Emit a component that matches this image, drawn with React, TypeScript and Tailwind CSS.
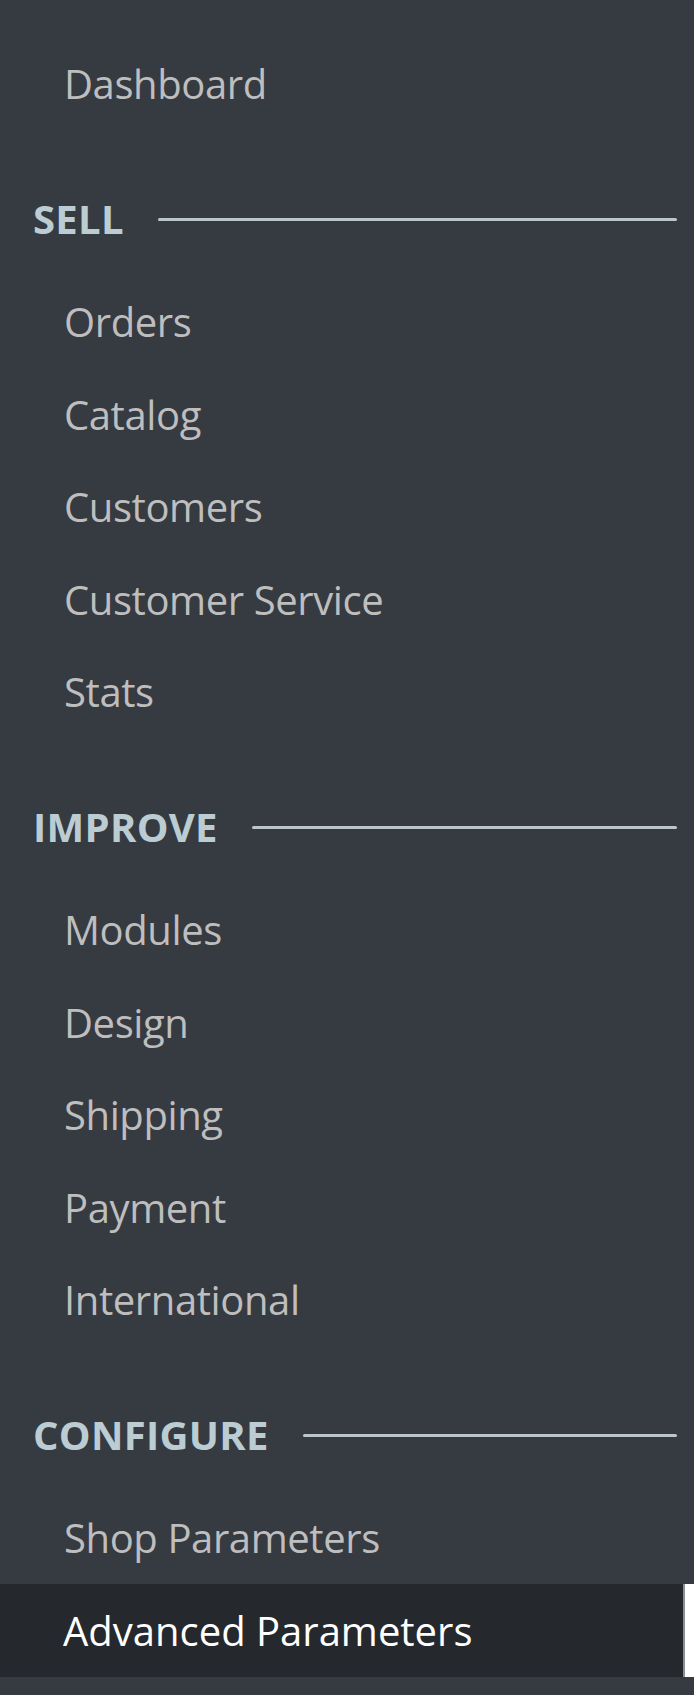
import React from "react";

type Section = { title: string; items: string[] };

const sections: Section[] = [
  { title: "SELL", items: ["Orders", "Catalog", "Customers", "Customer Service", "Stats"] },
  { title: "IMPROVE", items: ["Modules", "Design", "Shipping", "Payment", "International"] },
  { title: "CONFIGURE", items: ["Shop Parameters", "Advanced Parameters"] },
];

function Item({ label, active }: { label: string; active?: boolean }) {
  if (active) {
    return (
      <div className="flex h-[92.5px] items-center justify-between bg-[#25282d]">
        <span className="pl-[63px] text-white">{label}</span>
        <div className="h-full w-[11px] border-l-2 border-[#8a8f96] bg-white" />
      </div>
    );
  }
  return (
    <div className="flex h-[92.5px] items-center pl-[64px] tracking-[-0.4px] text-[#bebebe]">
      <span>{label}</span>
    </div>
  );
}

function Header({ title }: { title: string }) {
  return (
    <div className="mt-[69px] mb-[36.5px] flex h-[40px] items-center gap-[34px] pl-[33px] pr-[17px]">
      <span className="font-bold leading-none tracking-[0.3px] text-[#bbcdd2]">{title}</span>
      <div className="h-[3px] flex-1 rounded-full bg-[#bcc5cb]" />
    </div>
  );
}

export default function App() {
  return (
    <div
      className="min-h-[1695px] w-full bg-[#363a41] pt-[37.75px] text-[40px] leading-none"
      style={{ fontFamily: '"Open Sans", "Noto Sans", sans-serif' }}
    >
      <Item label="Dashboard" />
      {sections.map((s) => (
        <div key={s.title}>
          <Header title={s.title} />
          {s.items.map((it) => (
            <Item key={it} label={it} active={it === "Advanced Parameters"} />
          ))}
        </div>
      ))}
    </div>
  );
}
